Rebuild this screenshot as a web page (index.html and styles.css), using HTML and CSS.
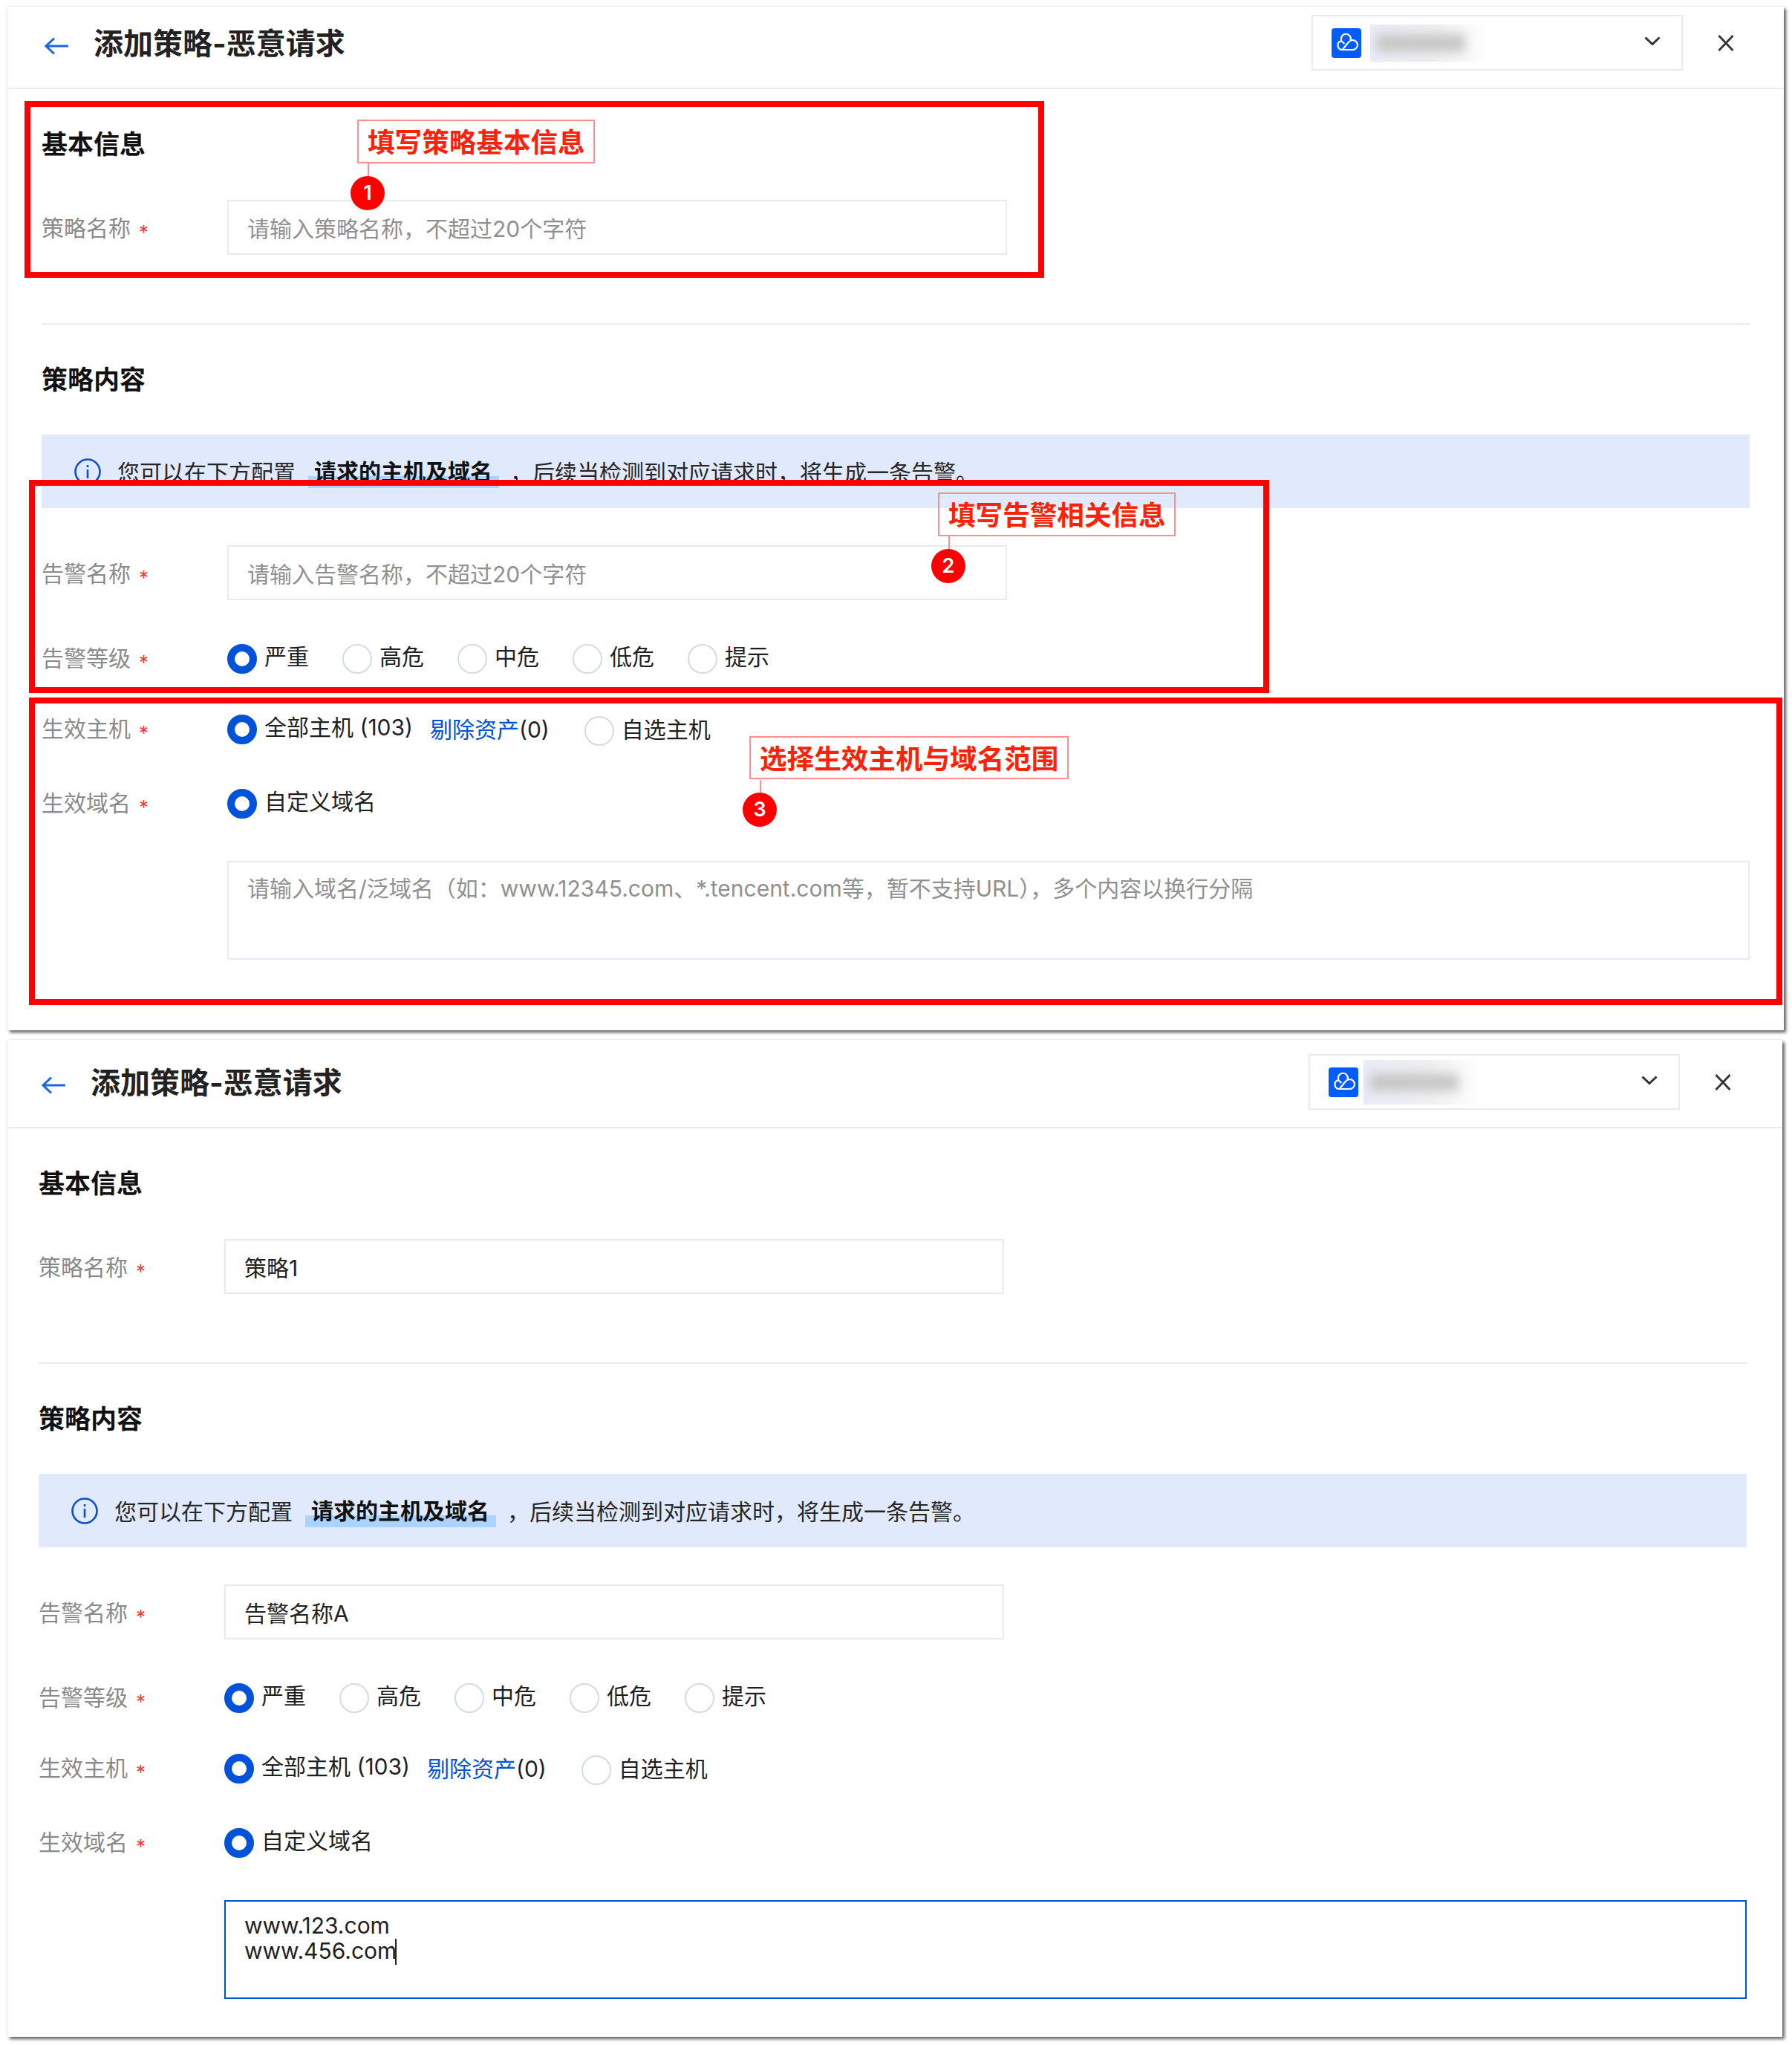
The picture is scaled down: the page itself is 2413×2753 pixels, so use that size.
FILE: index.html
```html
<!DOCTYPE html>
<html lang="zh">
<head>
<meta charset="utf-8">
<title>添加策略-恶意请求</title>
<link rel="stylesheet" href="styles.css">
</head>
<body>
<section class="panel panel-a">
  <header class="head">
    <svg class="back" viewBox="0 0 33 24"><path d="M32 12H2M13 1.500 2 12l11 10.500"/></svg>
    <h1 class="title">添加策略-恶意请求</h1>
    <div class="select">
      <svg class="logo" viewBox="0 0 40 40"><rect width="40" height="40" rx="4" fill="#005cff"/><path d="M14 29h14.500a6.500 6.500 0 0 0 0-13c-3 0-5 1.800-6.500 3.800L15 28.500M11.500 17.500A6.200 6.200 0 0 0 14 29M11.500 17.500c2.200-.2 4 1 5.800 3.500M13.500 17a6.500 6.500 0 1 1 12-.5"/></svg>
      <div class="smudge"><div class="smudge-bar"></div></div>
      <svg class="chev" viewBox="0 0 22 12"><path d="M1.500 1.500 11 10.500l9.500-9"/></svg>
    </div>
    <svg class="close" viewBox="0 0 22 22"><path d="M1.500 1 20.500 21M20.500 1 1.500 21"/></svg>
  </header>
  <h2 class="sec sec-first">基本信息</h2>
  <div class="row row-input row-name">
    <div class="lab">策略名称<span class="req">*</span></div>
    <div class="field ph">请输入策略名称，不超过20个字符</div>
  </div>
  <hr class="rule">
  <h2 class="sec">策略内容</h2>
  <div class="alert">
    <svg class="info" viewBox="0 0 36 36"><circle cx="18" cy="18" r="16.500"/><path d="M18 15v12M18 9v3"/></svg>
    <span class="plain">您可以在下方配置</span><strong class="hl">请求的主机及域名</strong><span class="plain">，后续当检测到对应请求时，将生成一条告警。</span>
  </div>
  <div class="row row-input row-alert">
    <div class="lab">告警名称<span class="req">*</span></div>
    <div class="field ph">请输入告警名称，不超过20个字符</div>
  </div>
  <div class="row row-level">
    <div class="lab">告警等级<span class="req">*</span></div>
    <div class="opt"><i class="radio on"></i><span class="opt-text up">严重</span></div>
    <div class="opt"><i class="radio"></i><span class="opt-text up">高危</span></div>
    <div class="opt"><i class="radio"></i><span class="opt-text up">中危</span></div>
    <div class="opt"><i class="radio"></i><span class="opt-text up">低危</span></div>
    <div class="opt"><i class="radio"></i><span class="opt-text up">提示</span></div>
  </div>
  <div class="row row-host">
    <div class="lab">生效主机<span class="req">*</span></div>
    <div class="opt"><i class="radio on"></i><span class="opt-text up">全部主机 (103)</span><span class="assets"><a class="link">剔除资产</a>(0)</span></div>
    <div class="opt opt-low"><i class="radio"></i><span class="opt-text">自选主机</span></div>
  </div>
  <div class="row row-domain">
    <div class="lab">生效域名<span class="req">*</span></div>
    <div class="opt"><i class="radio on"></i><span class="opt-text up">自定义域名</span></div>
  </div>
  <div class="area area-empty ph">请输入域名/泛域名（如：www.12345.com、*.tencent.com等，暂不支持URL），多个内容以换行分隔</div>

  <div class="mark mark-1"></div>
  <div class="mark mark-2"></div>
  <div class="mark mark-3"></div>
  <div class="note note-1">填写策略基本信息<span class="badge">1</span></div>
  <div class="note note-2">填写告警相关信息<span class="badge">2</span></div>
  <div class="note note-3">选择生效主机与域名范围<span class="badge">3</span></div>
</section>

<section class="panel panel-b">
  <header class="head">
    <svg class="back" viewBox="0 0 33 24"><path d="M32 12H2M13 1.500 2 12l11 10.500"/></svg>
    <h1 class="title">添加策略-恶意请求</h1>
    <div class="select">
      <svg class="logo" viewBox="0 0 40 40"><rect width="40" height="40" rx="4" fill="#005cff"/><path d="M14 29h14.500a6.500 6.500 0 0 0 0-13c-3 0-5 1.800-6.500 3.800L15 28.500M11.500 17.500A6.200 6.200 0 0 0 14 29M11.500 17.500c2.200-.2 4 1 5.800 3.500M13.500 17a6.500 6.500 0 1 1 12-.5"/></svg>
      <div class="smudge"><div class="smudge-bar"></div></div>
      <svg class="chev" viewBox="0 0 22 12"><path d="M1.500 1.500 11 10.500l9.500-9"/></svg>
    </div>
    <svg class="close" viewBox="0 0 22 22"><path d="M1.500 1 20.500 21M20.500 1 1.500 21"/></svg>
  </header>
  <h2 class="sec sec-first">基本信息</h2>
  <div class="row row-input row-name">
    <div class="lab">策略名称<span class="req">*</span></div>
    <div class="field">策略1</div>
  </div>
  <hr class="rule">
  <h2 class="sec">策略内容</h2>
  <div class="alert">
    <svg class="info" viewBox="0 0 36 36"><circle cx="18" cy="18" r="16.500"/><path d="M18 15v12M18 9v3"/></svg>
    <span class="plain">您可以在下方配置</span><strong class="hl">请求的主机及域名</strong><span class="plain">，后续当检测到对应请求时，将生成一条告警。</span>
  </div>
  <div class="row row-input row-alert">
    <div class="lab">告警名称<span class="req">*</span></div>
    <div class="field">告警名称A</div>
  </div>
  <div class="row row-level">
    <div class="lab">告警等级<span class="req">*</span></div>
    <div class="opt"><i class="radio on"></i><span class="opt-text up">严重</span></div>
    <div class="opt"><i class="radio"></i><span class="opt-text up">高危</span></div>
    <div class="opt"><i class="radio"></i><span class="opt-text up">中危</span></div>
    <div class="opt"><i class="radio"></i><span class="opt-text up">低危</span></div>
    <div class="opt"><i class="radio"></i><span class="opt-text up">提示</span></div>
  </div>
  <div class="row row-host">
    <div class="lab">生效主机<span class="req">*</span></div>
    <div class="opt"><i class="radio on"></i><span class="opt-text up">全部主机 (103)</span><span class="assets"><a class="link">剔除资产</a>(0)</span></div>
    <div class="opt opt-low"><i class="radio"></i><span class="opt-text">自选主机</span></div>
  </div>
  <div class="row row-domain">
    <div class="lab">生效域名<span class="req">*</span></div>
    <div class="opt"><i class="radio on"></i><span class="opt-text up">自定义域名</span></div>
  </div>
  <div class="area area-focus">www.123.com<br>www.456.com<i class="caret"></i></div>
</section>
</body>
</html>
```
FILE: styles.css
```css
* { box-sizing: border-box; }
html, body { margin: 0; padding: 0; background: #fff; }
body {
  width: 2413px;
  height: 2753px;
  overflow: hidden;
  font-family: Inter, "Noto Sans CJK SC", sans-serif;
  font-size: 30px;
  color: #1f1f1f;
}

.panel {
  position: relative;
  margin-left: 10px;
  background: #fff;
  box-shadow: 3px 3px 4px rgba(0, 0, 0, .6), 0 0 4px rgba(0, 0, 0, .1);
}
.panel-a { width: 2392px; margin-top: 9px; padding: 0 46px 95px; }
.panel-b { width: 2390px; margin-top: 13px; padding: 8px 48px 51px 42px; }

/* header */
.head {
  display: flex;
  align-items: center;
  height: 111px;
  margin: 0 -46px;
  padding: 11px 67px 23px 50px;
  border-bottom: 2px solid #e8ebf0;
}
.panel-b .head { margin: -8px -48px 0 -42px; height: 119px; padding: 19px 69px 23px 46px; }
.back { width: 33px; height: 24px; margin-top: 8px; flex: none; fill: none; stroke: #1c66e5; stroke-width: 3; }
.title { margin: 2px 0 0 33px; font-size: 40px; line-height: 56px; font-weight: 700; color: #222; }
.select {
  display: flex;
  align-items: center;
  width: 500px;
  height: 75px;
  margin-left: auto;
  padding: 0 28px 0 25px;
  border: 2px solid #e7eaf1;
}
.logo { width: 40px; height: 40px; flex: none; fill: none; stroke: #fff; stroke-width: 2.200; }
.logo rect { stroke: none; }
.smudge {
  display: flex;
  align-items: center;
  width: 160px;
  height: 50px;
  margin-left: 12px;
  background: linear-gradient(90deg, #e9ebf8 0%, #f0f0f0 55%, #fff 100%);
}
.panel-b .smudge { height: 60px; margin-left: 7px; }
.smudge-bar {
  width: 120px;
  height: 24px;
  margin-left: 8px;
  background: #c8c8c8;
  filter: blur(7px);
}
.chev { width: 22px; height: 12px; margin: -5px 0 0 auto; fill: none; stroke: #333; stroke-width: 3; }
.close { width: 22px; height: 22px; margin-left: 47px; fill: none; stroke: #333; stroke-width: 2.800; }

/* form */
.sec { height: 50px; margin: 49px 0 0; font-size: 35px; line-height: 50px; font-weight: 700; color: #111; }
.row { display: flex; align-items: center; }
.row-input { height: 74px; margin-top: 50px; }
.row-level { height: 40px; margin-top: 59px; }
.row-host { height: 40px; margin-top: 55px; }
.row-domain { height: 40px; margin-top: 60px; }
.lab { flex: none; width: 250px; padding-top: 4px; color: #8a8a8a; line-height: 40px; }
.row-input .lab { padding-top: 7px; }
.req { margin-left: 11px; font-size: 26px; color: #f23c3c; vertical-align: -4px; }
.field, .area {
  border: 2px solid #e7eaf0;
  padding-left: 25px;
  color: #222;
}
.field { display: flex; align-items: center; width: 1050px; height: 74px; }
.area {
  height: 133px;
  margin: 57px 0 0 250px;
  padding-top: 15px;
  line-height: 34px;
}
.area-empty { padding-top: 18px; }
.area-focus { border-color: #0052d9; color: #1f1f1f; }
.ph { color: #909090; }
.caret { display: inline-block; width: 2px; height: 35px; margin-left: -2px; background: #222; vertical-align: -8px; }
.rule { height: 2px; margin: 92px 0 0; border: 0; background: #e8ebf0; }

.alert {
  display: flex;
  align-items: center;
  height: 99px;
  margin-top: 49px;
  padding-left: 44px;
  background: #e1eafd;
  color: #262626;
}
.plain { padding-bottom: 2px; }
.info { width: 36px; height: 36px; margin-right: 22px; flex: none; fill: none; stroke: #0b4fcb; stroke-width: 2.600; }
.hl {
  margin: 0 15px 0 17px;
  padding: 1px 9px 0 8px;
  line-height: 44px;
  color: #111;
  background: linear-gradient(#abd3fd, #abd3fd) left bottom / 100% 16px no-repeat;
}

.opt { display: flex; align-items: center; margin-right: 45px; }
.opt-low { margin-top: 3px; }
.radio {
  flex: none;
  width: 40px;
  height: 40px;
  margin-right: 10px;
  border: 2px solid #d5dae5;
  border-radius: 50%;
}
.radio.on { border: 10px solid #0052d9; }
.opt-text { color: #1f1f1f; line-height: 40px; }
.opt-text.up { padding-bottom: 6px; }
.opt-low .opt-text { padding-bottom: 3px; }
.assets { margin-left: 23px; color: #1f1f1f; line-height: 40px; }
.link { color: #0052d9; }
.row-host .opt { margin-right: 47px; }

/* annotations over the first panel */
.mark { position: absolute; border: 8px solid #f00; }
.mark-1 { left: 23px; top: 127px; width: 1373px; height: 238px; }
.mark-2 { left: 29px; top: 637px; width: 1670px; height: 287px; }
.mark-3 { left: 29px; top: 930px; width: 2361px; height: 414px; }
.note {
  position: absolute;
  height: 59px;
  padding-left: 12px;
  border: 2px solid #ff8f8f;
  color: #fa2208;
  font-size: 36.600px;
  font-weight: 700;
  line-height: 58px;
  white-space: nowrap;
}
.note::after {
  content: "";
  position: absolute;
  left: 12px;
  top: 57px;
  width: 2px;
  height: 20px;
  background: #ff8f8f;
}
.note-1 { left: 471px; top: 152px; width: 320px; }
.note-2 { left: 1253px; top: 654px; width: 320px; }
.note-3 { left: 999px; top: 982px; width: 430px; height: 58px; }
.badge {
  position: absolute;
  left: -11px;
  top: 74px;
  z-index: 1;
  width: 46px;
  height: 46px;
  border-radius: 50%;
  background: #f00;
  color: #fff;
  font-size: 27px;
  font-weight: 600;
  line-height: 46px;
  text-align: center;
}
```
